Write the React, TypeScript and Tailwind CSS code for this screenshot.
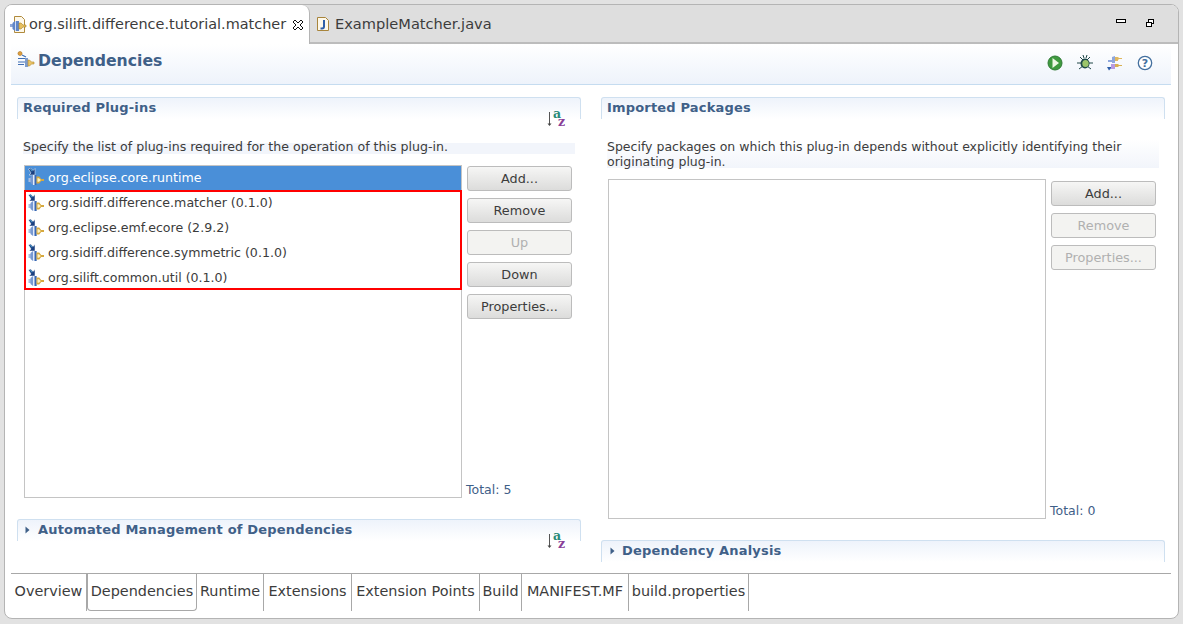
import React from "react";

const font = { fontFamily: '"DejaVu Sans", sans-serif' };

function PluginIcon({ lift }: { lift?: boolean }) {
  return (
    <svg width="18" height="18" viewBox="0 -1 18 18" className={"shrink-0 " + (lift ? "mb-[2px]" : "")}>
      <path d="M1.5 0 3.5 -1 6 1.5 8 -0.5V6H2l2-2z" fill="#1a3f80" stroke="#fff" strokeWidth="0.5" />
      <path d="M3 0.5 3.7 0 5.5 2 5 2.6z" fill="#49a9d6" />
      <rect x="1.5" y="9" width="3.5" height="4" fill="#a9bde0" />
      <path d="M3.5 8 6 6h3.5v10H6l-2.5-2z" fill="#7799d2" />
      <rect x="6" y="6" width="1.2" height="10" fill="#e3ebf8" />
      <rect x="8" y="6" width="1.5" height="10" fill="#3a68b0" />
      <path d="M9.5 7.5h2.7l2 2.5H17v2h-2.800l-2 2.500H9.500z" fill="#d6a93f" />
      <path d="M10.500 9.200H12l1.800 1.800L12 12.800h-1.500z" fill="#fff3c0" />
    </svg>
  );
}

function SortIcon() {
  return (
    <svg width="24" height="26" viewBox="0 0 24 26" className="shrink-0">
      <path d="M3.5 7v12" stroke="#555" strokeWidth="1" />
      <path d="M1.5 18.5h4l-2 2.5z" fill="#444" />
      <text x="7" y="13" fontSize="12.5" fontWeight="700" fill="#2a8a78" style={{ fontFamily: '"DejaVu Serif", serif' }}>a</text>
      <text x="12" y="21" fontSize="12.5" fontWeight="700" fill="#8a3f98" style={{ fontFamily: '"DejaVu Serif", serif' }}>z</text>
    </svg>
  );
}

function Triangle() {
  return (
    <svg width="5" height="8" viewBox="0 0 5 8" className="shrink-0">
      <path d="M0.5 0.5 4.5 4 0.5 7.5z" fill="#3f6088" />
    </svg>
  );
}

function Btn({ label, disabled }: { label: string; disabled?: boolean }) {
  return (
    <div
      className={
        "w-[105px] h-[25px] flex items-center justify-center pt-[1px] rounded-[3px] border border-[#bcbcbc] text-[12.8px] " +
        (disabled
          ? "bg-[#f3f3f1] text-[#b0b0b0]"
          : "bg-gradient-to-b from-[#f6f6f5] to-[#dcdcdb] text-[#3c3c3c]")
      }
    >
      {label}
    </div>
  );
}

function SectionHeader({
  title,
  collapsed,
  sort,
  titleClass,
  triClass,
}: {
  title: string;
  collapsed?: boolean;
  sort?: boolean;
  titleClass: string;
  triClass?: string;
}) {
  return (
    <div className="h-[22px] flex items-start rounded-t-[3px] border border-b-0 border-[#cfe0f0] bg-gradient-to-b from-[#eef3fb] to-white">
      {collapsed && (
        <div className={"mt-[6px] " + triClass}>
          <Triangle />
        </div>
      )}
      <div className={"mt-[1px] text-[13px] font-bold tracking-[0.18px] leading-[18px] text-[#3f6088] " + titleClass}>
        {title}
      </div>
      {sort && (
        <div className="ml-auto mr-[10px] mt-[7px] h-[14px]">
          <SortIcon />
        </div>
      )}
    </div>
  );
}

const rows = [
  "org.sidiff.difference.matcher (0.1.0)",
  "org.eclipse.emf.ecore (2.9.2)",
  "org.sidiff.difference.symmetric (0.1.0)",
  "org.silift.common.util (0.1.0)",
];

const pageTabs = [
  ["Overview", "w-[76px]"],
  ["Dependencies", "w-[110px]"],
  ["Runtime", "w-[67px]"],
  ["Extensions", "w-[88px]"],
  ["Extension Points", "w-[128px]"],
  ["Build", "w-[42px]"],
  ["MANIFEST.MF", "w-[107px]"],
  ["build.properties", "w-[120px]"],
];

export default function App() {
  return (
    <div style={font} className="w-[1183px] h-[624px] bg-[#e2e2e2] pt-[4px] pl-[4px] overflow-hidden">
      <div className="w-[1175px] h-[615px] flex flex-col bg-white border border-[#b4b4b4] rounded-t-lg rounded-b-lg overflow-hidden">
        {/* editor tabs */}
        <div className="h-[39px] shrink-0 flex bg-[#dedede] border-b-2 border-[#bcbcbc]">
          <div className="w-[305px] h-[39px] shrink-0 bg-white rounded-tr-lg border-r border-[#b4b4b4] flex items-center pl-[5px]">
            <svg width="18" height="19" viewBox="0 0 18 19" className="shrink-0">
              <path d="M4.500 1.500h7l3 3v13h-10z" fill="#fdf8ea" stroke="#b08a3c" />
              <rect x="0" y="9" width="3" height="3" fill="#8fa8d8" />
              <path d="M2.500 8 5 6h4v10H5l-2.500-2z" fill="#5f86c8" />
              <rect x="5" y="6" width="1" height="10" fill="#cfdcf2" />
              <path d="M9 8h2l2 2h3v2h-3l-2 2H9z" fill="#e6bf5e" stroke="#a98428" strokeWidth="0.6" />
            </svg>
            <span className="ml-[1px] text-[14.45px] text-[#3c3c3c] whitespace-nowrap">org.silift.difference.tutorial.matcher</span>
            <svg width="12" height="12" viewBox="0 0 12 12" className="ml-[6px] shrink-0">
              <path d="M1 3 3 1 6 4 9 1 11 3 8 6 11 9 9 11 6 8 3 11 1 9 4 6z" fill="#fff" stroke="#111" strokeWidth="1" />
            </svg>
          </div>
          <div className="flex items-center pl-[6px]">
            <svg width="14" height="16" viewBox="0 0 14 16" className="shrink-0">
              <path d="M1.500 1.500h8l3 3v10h-11z" fill="#fdf8ea" stroke="#a8853c" />
              <path d="M8 4v6.500a2 2 0 0 1-2 2H4.500" fill="none" stroke="#2f5fa8" strokeWidth="2" />
            </svg>
            <span className="ml-[5px] text-[14.6px] text-[#3c3c3c] whitespace-nowrap">ExampleMatcher.java</span>
          </div>
          <div className="ml-auto flex items-start pt-[14px] pr-[24px] gap-[20px]">
            <div className="w-[10px] h-[4px] border border-black bg-white" />
            <svg width="8" height="8" viewBox="0 0 8 8" className="shrink-0">
              <rect x="2.500" y="0.500" width="5" height="4" fill="#fff" stroke="#000" />
              <rect x="0.500" y="3.500" width="5" height="4" fill="#fff" stroke="#000" />
            </svg>
          </div>
        </div>

        {/* form */}
        <div className="flex-1 flex flex-col pl-[6px] pr-[7px] min-h-0">
          <div className="h-[41px] shrink-0 flex items-start bg-gradient-to-b from-white to-[#eef3fb] border-b border-[#c5dcf0]">
            <svg width="18" height="18" viewBox="0 0 18 18" className="ml-[6px] mt-[7px] shrink-0">
              <circle cx="3" cy="2.500" r="2" fill="#e0a040" stroke="#a87020" strokeWidth="0.6" />
              <path d="M5 4l4 2M1 7.500h7M1 11h7M1 13.500h6" stroke="#3f6fb5" strokeWidth="1.2" />
              <path d="M8 7h3v9H8z" fill="#7f9ccb" />
              <path d="M11 9h1.500l2 2H17v2h-2.500l-2 2H11z" fill="#e8c46a" stroke="#b58a2a" strokeWidth="0.6" />
            </svg>
            <div className="ml-[3px] mt-[7px] text-[15.7px] leading-[20px] font-bold text-[#3f6088]">Dependencies</div>
            <div className="ml-auto flex items-center gap-[14px] mt-[11px] mr-[18px]">
              <svg width="16" height="16" viewBox="0 0 16 16">
                <circle cx="8" cy="8" r="7" fill="#3f9a3f" stroke="#2f7a35" />
                <path d="M5.500 3 12 8l-6.500 5z" fill="#eef8e4" />
              </svg>
              <svg width="16" height="16" viewBox="0 0 16 16">
                <path d="M3 2l3 3M13 2l-3 3M0 8h4M12 8h4M2 14l4-3M14 14l-4-3M6 0l1 3M10 0 9 3" stroke="#204848" strokeWidth="1" />
                <ellipse cx="8" cy="8.500" rx="4.500" ry="5" fill="#1f4a4a" />
                <ellipse cx="8.500" cy="8.500" rx="3.200" ry="3.600" fill="#9cc56a" />
              </svg>
              <svg width="16" height="16" viewBox="0 0 16 16">
                <path d="M1 5h4V2l3-1v7H5V7H1z" fill="#8ea6dc" />
                <path d="M8 2h3l1 1h3v1h-3l-1 1v1H8z" fill="#e0b860" />
                <path d="M0 12l5 0-3 3.500z" fill="#2f5fa8" />
                <path d="M4 9h4v5H4z" fill="#b79ae0" />
                <path d="M8 9h3l1 1h3v1h-3l-1 1H8z" fill="#d8b050" />
              </svg>
              <svg width="16" height="16" viewBox="0 0 16 16">
                <circle cx="8" cy="8" r="6.700" fill="#fff" stroke="#44709f" strokeWidth="1.3" />
                <text x="8" y="12" textAnchor="middle" fontSize="11" fontWeight="700" fill="#44709f">?</text>
              </svg>
            </div>
          </div>

          <div className="flex gap-[20px] pl-[6px] mt-[12px]">
            {/* left column */}
            <div className="w-[564px] shrink-0">
              <SectionHeader title="Required Plug-ins" sort titleClass="ml-[5px]" />
              <div className="ml-[6px] mt-[24px] w-[552px] h-[11px] leading-[7px] bg-[#f2f5fb] text-[12.6px] text-[#3c3c3c] whitespace-nowrap">
                Specify the list of plug-ins required for the operation of this plug-in.
              </div>
              <div className="flex ml-[7px] mt-[11px] h-[333px]">
                <div className="relative w-[438px] shrink-0 border border-[#c4c4c4] text-[12.6px] text-[#3c3c3c]">
                  <div className="h-[24px] bg-[#4a8fd8] text-white flex items-center pl-[2px] gap-[3px]">
                    <PluginIcon lift />
                    <span>org.eclipse.core.runtime</span>
                  </div>
                  {rows.map((r) => (
                    <div key={r} className="h-[25px] flex items-center pl-[2px] pt-[1px] gap-[3px]">
                      <PluginIcon />
                      <span>{r}</span>
                    </div>
                  ))}
                  <div className="absolute top-[24px] -left-px -right-px h-[100px] border-2 border-[#f00]" />
                </div>
                <div className="ml-[5px] flex-1 flex flex-col pt-[1px]">
                  <div className="flex flex-col gap-[7px]">
                    <Btn label="Add..." />
                    <Btn label="Remove" />
                    <Btn label="Up" disabled />
                    <Btn label="Down" />
                    <Btn label="Properties..." />
                  </div>
                  <div className="mt-auto mb-[1px] -ml-px text-[12.5px] leading-[15px] text-[#3f6088]">Total: 5</div>
                </div>
              </div>
              <div className="mt-[21px]">
                <SectionHeader title="Automated Management of Dependencies" collapsed sort triClass="ml-[7px]" titleClass="ml-[8px]" />
              </div>
            </div>

            {/* right column */}
            <div className="w-[564px] shrink-0">
              <SectionHeader title="Imported Packages" titleClass="ml-[5px]" />
              <div className="ml-[6px] mt-[20px] w-[552px] h-[29px] leading-[15px] bg-gradient-to-b from-white to-[#f2f5fb] text-[12.5px] text-[#3c3c3c]">
                Specify packages on which this plug-in depends without explicitly identifying their originating plug-in.
              </div>
              <div className="flex ml-[7px] mt-[11px] h-[340px]">
                <div className="w-[438px] shrink-0 border border-[#c4c4c4]" />
                <div className="ml-[5px] flex-1 flex flex-col pt-[2px]">
                  <div className="flex flex-col gap-[7px]">
                    <Btn label="Add..." />
                    <Btn label="Remove" disabled />
                    <Btn label="Properties..." disabled />
                  </div>
                  <div className="mt-auto mb-[1px] -ml-px text-[12.5px] leading-[15px] text-[#3f6088]">Total: 0</div>
                </div>
              </div>
              <div className="mt-[21px]">
                <SectionHeader title="Dependency Analysis" collapsed triClass="ml-[8px]" titleClass="ml-[7px]" />
              </div>
            </div>
          </div>

          {/* page tabs */}
          <div className="mt-auto mb-[7px] h-[38px] shrink-0 flex border-t border-[#a8a8a8] text-[14.4px] text-[#3c3c3c]">
            {pageTabs.map(([t, w]) =>
              t === "Dependencies" ? (
                <div key={t} className={w + " shrink-0 flex items-center justify-center pb-[1px] bg-white border-x border-b border-[#a8a8a8] rounded-b-[4px]"}>
                  {t}
                </div>
              ) : (
                <div key={t} className={w + " shrink-0 flex items-center justify-center pb-[2px] border-r border-[#a8a8a8] whitespace-nowrap"}>
                  {t}
                </div>
              )
            )}
          </div>
        </div>
      </div>
    </div>
  );
}
